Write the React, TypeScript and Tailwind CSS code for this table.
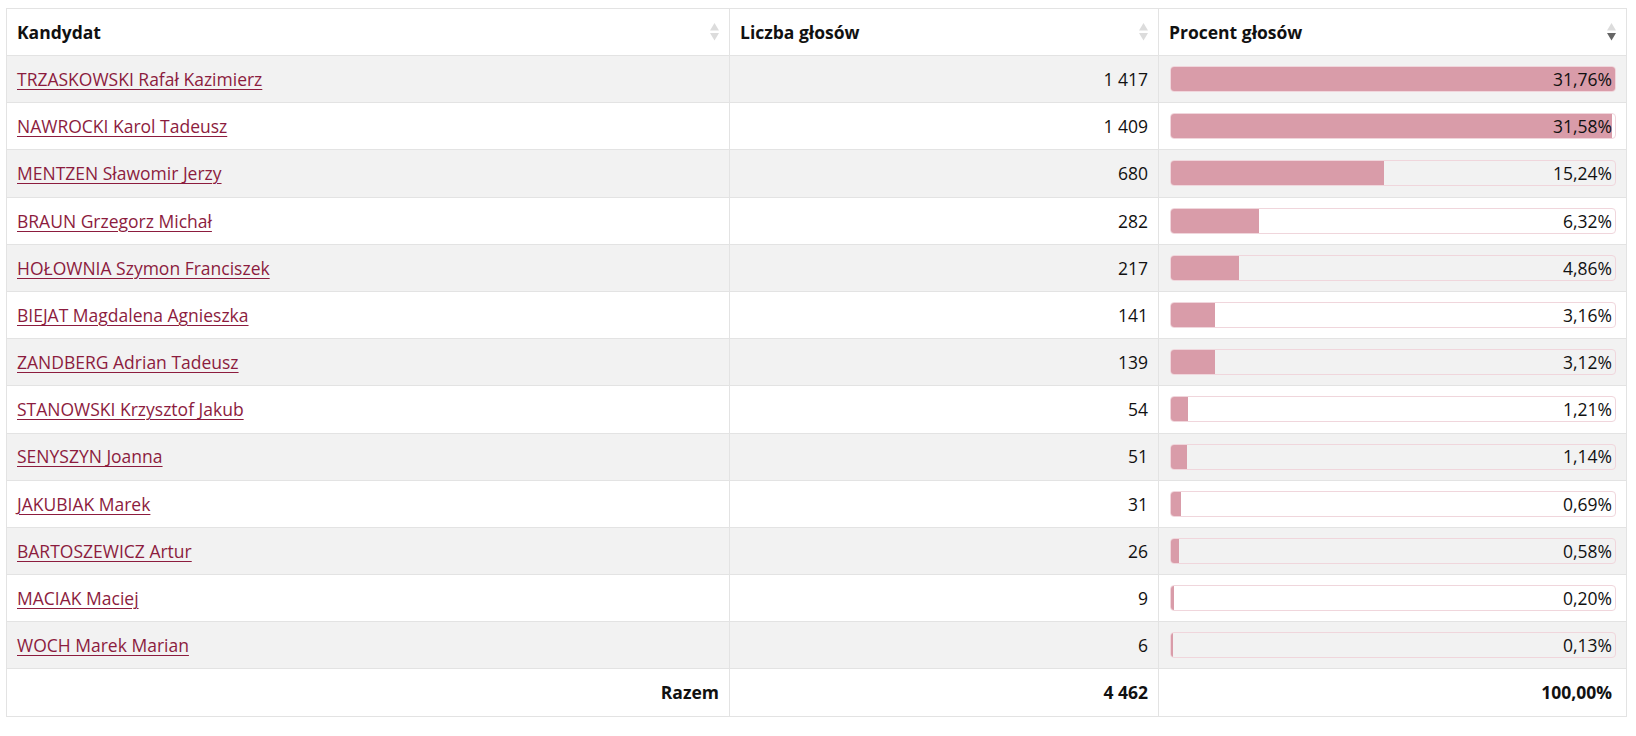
import React from "react";

const rows: [string, string, number][] = [
  ["TRZASKOWSKI Rafał Kazimierz", "1 417", 31.76],
  ["NAWROCKI Karol Tadeusz", "1 409", 31.58],
  ["MENTZEN Sławomir Jerzy", "680", 15.24],
  ["BRAUN Grzegorz Michał", "282", 6.32],
  ["HOŁOWNIA Szymon Franciszek", "217", 4.86],
  ["BIEJAT Magdalena Agnieszka", "141", 3.16],
  ["ZANDBERG Adrian Tadeusz", "139", 3.12],
  ["STANOWSKI Krzysztof Jakub", "54", 1.21],
  ["SENYSZYN Joanna", "51", 1.14],
  ["JAKUBIAK Marek", "31", 0.69],
  ["BARTOSZEWICZ Artur", "26", 0.58],
  ["MACIAK Maciej", "9", 0.2],
  ["WOCH Marek Marian", "6", 0.13],
];

const max = 31.76;

function SortIcon({ active }: { active?: boolean }) {
  return (
    <svg width="9" height="18" viewBox="0 0 9 18" className="shrink-0">
      <path d="M4.5 0 L9 7.5 L0 7.5 Z" fill="#dcdcdc" />
      <path d="M0 10 L9 10 L4.5 17.5 Z" fill={active ? "#666666" : "#dcdcdc"} />
    </svg>
  );
}

function fmt(n: number) {
  return n.toFixed(2).replace(".", ",") + "%";
}

export default function App() {
  return (
    <div
      className="bg-white pt-[8px] pl-[6px]"
      style={{ fontFamily: '"Open Sans", "Noto Sans", sans-serif' }}
    >
      <table className="w-[1620px] border-collapse table-fixed text-[17.5px] text-[#111]">
        <colgroup>
          <col className="w-[723px]" />
          <col className="w-[429px]" />
          <col className="w-[468px]" />
        </colgroup>
        <thead>
          <tr className="h-[47px] bg-white">
            <th className="border border-[#e3e3e3] px-[10px] text-left font-bold">
              <div className="flex items-center justify-between">
                <span>Kandydat</span>
                <SortIcon />
              </div>
            </th>
            <th className="border border-[#e3e3e3] px-[10px] text-left font-bold">
              <div className="flex items-center justify-between">
                <span>Liczba głosów</span>
                <SortIcon />
              </div>
            </th>
            <th className="border border-[#e3e3e3] px-[10px] text-left font-bold">
              <div className="flex items-center justify-between">
                <span>Procent głosów</span>
                <SortIcon active />
              </div>
            </th>
          </tr>
        </thead>
        <tbody>
          {rows.map(([name, votes, pct], i) => (
            <tr
              key={name}
              className={`h-[47.2px] ${i % 2 === 0 ? "bg-[#f2f2f2]" : "bg-white"}`}
            >
              <td className="border border-[#e3e3e3] px-[10px]">
                <a href="#" className="text-[#8c1c3e] underline underline-offset-[3px] decoration-1">
                  {name}
                </a>
              </td>
              <td className="border border-[#e3e3e3] px-[10px] text-right">{votes}</td>
              <td className="border border-[#e3e3e3] pl-[11px] pr-[10px]">
                <div className="relative h-[26px] rounded-[4px] border border-[#f0d6dc] overflow-hidden">
                  <div
                    className="absolute left-0 top-0 bottom-0 bg-[#d99ca9]"
                    style={{ width: `${(pct / max) * 100}%` }}
                  />
                  <div className="relative flex h-full items-center justify-end pr-[3px]">
                    {fmt(pct)}
                  </div>
                </div>
              </td>
            </tr>
          ))}
          <tr className="h-[47.2px] bg-white font-bold">
            <td className="border border-[#e3e3e3] px-[10px] text-right">Razem</td>
            <td className="border border-[#e3e3e3] px-[10px] text-right">4 462</td>
            <td className="border border-[#e3e3e3] pl-[11px] pr-[14px] text-right">100,00%</td>
          </tr>
        </tbody>
      </table>
    </div>
  );
}
